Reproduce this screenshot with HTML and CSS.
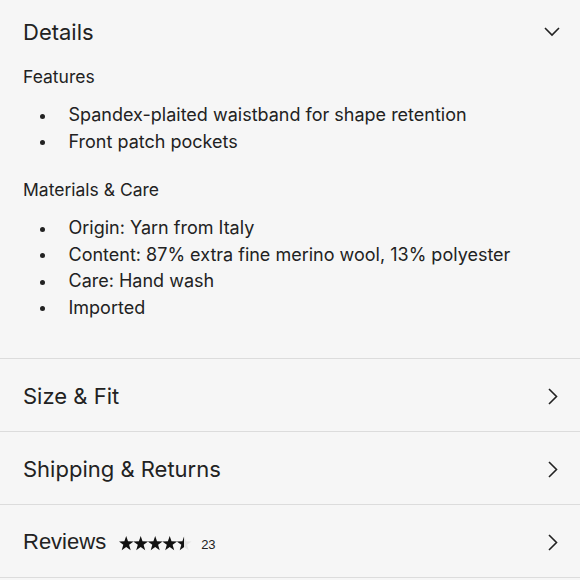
FILE: index.html
```html
<!DOCTYPE html>
<html lang="en">
<head>
  <meta charset="UTF-8" />
  <meta name="viewport" content="width=device-width, initial-scale=1.0"/>
  <title>Product Details</title>
  <link rel="stylesheet" href="styles.css">
</head>
<body>
  <div class="accordion">
    <section class="panel open">
      <div class="panel-head">
        <h2 class="panel-title">Details</h2>
        <svg class="chev-down" width="16" height="10" viewBox="0 0 16 10"><path d="M1 1l7 7 7-7" fill="none" stroke="#222" stroke-width="1.6"/></svg>
      </div>
      <div class="panel-body">
        <h3 class="group-title">Features</h3>
        <ul class="list">
          <li>Spandex-plaited waistband for shape retention</li>
          <li>Front patch pockets</li>
        </ul>
        <h3 class="group-title">Materials &amp; Care</h3>
        <ul class="list">
          <li>Origin: Yarn from Italy</li>
          <li>Content: 87% extra fine merino wool, 13% polyester</li>
          <li>Care: Hand wash</li>
          <li>Imported</li>
        </ul>
      </div>
    </section>

    <section class="panel">
      <div class="panel-head">
        <h2 class="panel-title">Size &amp; Fit</h2>
        <svg class="chev-right" width="10" height="17" viewBox="0 0 10 17"><path d="M1 1l7.5 7.5L1 16" fill="none" stroke="#222" stroke-width="1.6"/></svg>
      </div>
    </section>

    <section class="panel">
      <div class="panel-head">
        <h2 class="panel-title">Shipping &amp; Returns</h2>
        <svg class="chev-right" width="10" height="17" viewBox="0 0 10 17"><path d="M1 1l7.5 7.5L1 16" fill="none" stroke="#222" stroke-width="1.6"/></svg>
      </div>
    </section>

    <section class="panel">
      <div class="panel-head">
        <div class="reviews">
          <h2 class="panel-title reviews-title">Reviews</h2>
          <svg class="stars" width="73" height="15" viewBox="0 0 73 15">
            <defs>
              <linearGradient id="halfFill" x1="0" x2="1" y1="0" y2="0">
                <stop offset="50%" stop-color="#111"/>
                <stop offset="50%" stop-color="#e4e4e4"/>
              </linearGradient>
            </defs>
            <path fill="#111" d="M7.2 0L9 5.3 14.6 5.4 10.1 8.8 11.7 14.3 7.2 11 2.7 14.3 4.3 8.8-0.2 5.4 5.4 5.3Z"/>
            <path fill="#111" transform="translate(14.5 0)" d="M7.2 0L9 5.3 14.6 5.4 10.1 8.8 11.7 14.3 7.2 11 2.7 14.3 4.3 8.8-0.2 5.4 5.4 5.3Z"/>
            <path fill="#111" transform="translate(29 0)" d="M7.2 0L9 5.3 14.6 5.4 10.1 8.8 11.7 14.3 7.2 11 2.7 14.3 4.3 8.8-0.2 5.4 5.4 5.3Z"/>
            <path fill="#111" transform="translate(43.5 0)" d="M7.2 0L9 5.3 14.6 5.4 10.1 8.8 11.7 14.3 7.2 11 2.7 14.3 4.3 8.8-0.2 5.4 5.4 5.3Z"/>
            <path fill="url(#halfFill)" transform="translate(58 0)" d="M7.2 0L9 5.3 14.6 5.4 10.1 8.8 11.7 14.3 7.2 11 2.7 14.3 4.3 8.8-0.2 5.4 5.4 5.3Z"/>
          </svg>
          <span class="count">23</span>
        </div>
        <svg class="chev-right" width="10" height="17" viewBox="0 0 10 17"><path d="M1 1l7.5 7.5L1 16" fill="none" stroke="#222" stroke-width="1.6"/></svg>
      </div>
    </section>
  </div>
</body>
</html>
```

FILE: styles.css
```css
body {
  margin: 0;
  background: #f6f6f6;
  color: #222;
  font-family: Inter, "Liberation Sans", sans-serif;
}
.panel {
  border-bottom: 1px solid #dcdcdc;
}
.panel-head {
  display: flex;
  align-items: center;
  justify-content: space-between;
  padding: 22px 20px 20px 23px;
}
.panel.open .panel-head {
  padding-top: 17px;
  padding-bottom: 0;
}
.panel-title {
  margin: 0;
  font-size: 22px;
  font-weight: 400;
  line-height: 30px;
}
.chev-right {
  margin-right: 2px;
}
.panel-body {
  padding: 17px 20px 37px 23px;
}
.group-title {
  margin: 0;
  font-size: 17.5px;
  font-weight: 400;
  line-height: 26px;
}
.list {
  list-style: none;
  margin: 12px 0 22px;
  padding: 0;
}
.list:last-child {
  margin-bottom: 0;
}
.list li {
  display: flex;
  align-items: center;
  font-size: 18px;
  line-height: 26.5px;
}
.list li::before {
  content: "";
  flex: none;
  width: 5px;
  height: 5px;
  border-radius: 50%;
  background: #222;
  margin: 2px 24px 0 16.5px;
}
.reviews {
  display: flex;
  align-items: center;
}
.reviews-title {
  font-family: "Liberation Sans", Arial, sans-serif;
}
.stars {
  margin: 2px 0 0 13px;
}
.count {
  margin-left: 9px;
  font-family: "Liberation Sans", Arial, sans-serif;
  font-size: 13px;
  padding-top: 4px;
}
```
